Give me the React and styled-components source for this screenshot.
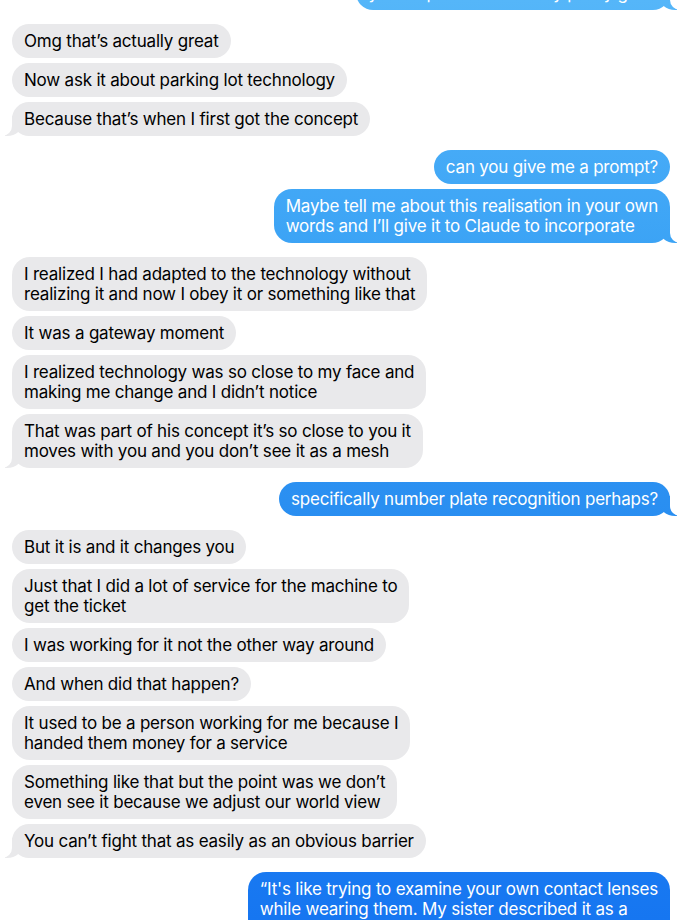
import React from "react";
import styled, { createGlobalStyle, css } from "styled-components";

const Global = createGlobalStyle`
  html, body { margin: 0; padding: 0; background: #ffffff; }
  body {
    font-family: Inter, "Noto Sans", "Liberation Sans", sans-serif;
    -webkit-font-smoothing: antialiased;
  }
`;

const Thread = styled.main`
  width: 680px;
  box-sizing: border-box;
  padding: 0 10px 0 12px;
  display: flex;
  flex-direction: column;
  gap: 14px;
  overflow: hidden;
`;

const Group = styled.section`
  display: flex;
  flex-direction: column;
  gap: 5px;
  align-items: ${(p) => (p.$me ? "flex-end" : "flex-start")};
  margin-top: ${(p) => (p.$clipTop ? "-24px" : "0")};
`;

const GRAY = "#e9e9eb";
const BLUE = "linear-gradient(180deg, #55b6f9 0px, #3aa2f5 260px, #2a8ff1 500px, #1676f1 920px)";

const Bubble = styled.div`
  position: relative;
  box-sizing: border-box;
  padding: 7px 12px;
  border-radius: 18px;
  font-size: 17px;
  line-height: 20px;
  letter-spacing: -0.2px;
  white-space: nowrap;
  ${(p) =>
    p.$me
      ? css`
          color: #ffffff;
          background: ${BLUE};
          background-attachment: fixed;
        `
      : css`
          color: #000000;
          background: ${GRAY};
        `}

  ${(p) =>
    p.$tail &&
    !p.$me &&
    css`
      &::before {
        content: "";
        position: absolute;
        bottom: 0;
        left: -7px;
        width: 18px;
        height: 20px;
        background: ${GRAY};
        border-bottom-right-radius: 16px 14px;
      }
      &::after {
        content: "";
        position: absolute;
        bottom: 0;
        left: -26px;
        width: 26px;
        height: 21px;
        background: #ffffff;
        border-bottom-right-radius: 10px;
      }
    `}

  ${(p) =>
    p.$tail &&
    p.$me &&
    css`
      &::before {
        content: "";
        position: absolute;
        bottom: 0;
        right: -7px;
        width: 18px;
        height: 20px;
        background: ${BLUE};
        background-attachment: fixed;
        border-bottom-left-radius: 16px 14px;
      }
      &::after {
        content: "";
        position: absolute;
        bottom: 0;
        right: -26px;
        width: 26px;
        height: 21px;
        background: #ffffff;
        border-bottom-left-radius: 10px;
      }
    `}
`;

const Text = styled.span`
  position: relative;
  z-index: 1;
`;

const groups = [
  {
    me: true,
    clipTop: true,
    msgs: [["your explanation is really pretty good"]],
  },
  {
    me: false,
    msgs: [
      ["Omg that\u2019s actually great"],
      ["Now ask it about parking lot technology"],
      ["Because that\u2019s when I first got the concept"],
    ],
  },
  {
    me: true,
    msgs: [
      ["can you give me a prompt?"],
      [
        "Maybe tell me about this realisation in your own",
        "words and I\u2019ll give it to Claude to incorporate",
      ],
    ],
  },
  {
    me: false,
    msgs: [
      [
        "I realized I had adapted to the technology without",
        "realizing it and now I obey it or something like that",
      ],
      ["It was a gateway moment"],
      [
        "I realized technology was so close to my face and",
        "making me change and I didn\u2019t notice",
      ],
      [
        "That was part of his concept it\u2019s so close to you it",
        "moves with you and you don\u2019t see it as a mesh",
      ],
    ],
  },
  {
    me: true,
    msgs: [["specifically number plate recognition perhaps?"]],
  },
  {
    me: false,
    msgs: [
      ["But it is and it changes you"],
      [
        "Just that I did a lot of service for the machine to",
        "get the ticket",
      ],
      ["I was working for it not the other way around"],
      ["And when did that happen?"],
      [
        "It used to be a person working for me because I",
        "handed them money for a service",
      ],
      [
        "Something like that but the point was we don\u2019t",
        "even see it because we adjust our world view",
      ],
      ["You can\u2019t fight that as easily as an obvious barrier"],
    ],
  },
  {
    me: true,
    open: true,
    msgs: [
      [
        "\u201CIt's like trying to examine your own contact lenses",
        "while wearing them. My sister described it as a",
        "mesh that moves with you.",
      ],
    ],
  },
];

export default function App() {
  return (
    <>
      <Global />
      <Thread>
        {groups.map((g, gi) => (
          <Group key={gi} $me={g.me} $clipTop={g.clipTop}>
            {g.msgs.map((lines, mi) => (
              <Bubble
                key={mi}
                $me={g.me}
                $tail={mi === g.msgs.length - 1 && !g.open}
              >
                <Text>
                  {lines.map((l, li) => (
                    <React.Fragment key={li}>
                      {li > 0 && <br />}
                      {l}
                    </React.Fragment>
                  ))}
                </Text>
              </Bubble>
            ))}
          </Group>
        ))}
      </Thread>
    </>
  );
}
